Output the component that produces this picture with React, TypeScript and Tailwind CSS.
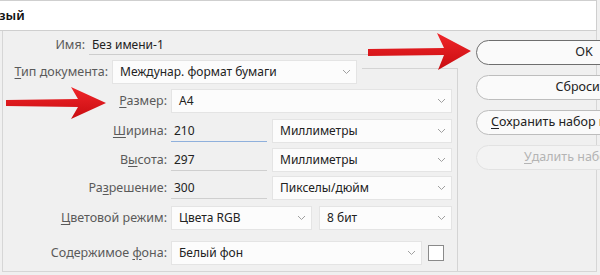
import React from "react";

const font = { fontFamily: '"Noto Sans", "Open Sans", Arial, sans-serif' };

function Chevron() {
  return (
    <svg width="9" height="6" viewBox="0 0 9 6" className="shrink-0">
      <path d="M1 1l3.5 3.5L8 1" stroke="#a0a0a0" fill="none" strokeWidth="1" />
    </svg>
  );
}

function Select({ text, w }: { text: string; w: string }) {
  return (
    <div
      className={`flex items-center justify-between bg-[#fcfcfc] border border-[#e4e4e4] h-[24px] pl-[7px] pr-[5px] text-[12px] text-[#222] ${w}`}
    >
      <span>{text}</span>
      <Chevron />
    </div>
  );
}

function U({ c }: { c: string }) {
  return <span className="underline underline-offset-2">{c}</span>;
}

function Label({ children, w }: { children: React.ReactNode; w: string }) {
  return (
    <div className={`shrink-0 text-right text-[12.5px] text-[#5a5a5a] pr-[4px] ${w}`}>{children}</div>
  );
}

function Input({ text, focused }: { text: string; focused?: boolean }) {
  return (
    <div
      className={`w-[96px] h-[22px] flex items-end pl-[3px] pb-[1px] text-[12px] text-[#222] border-b ${
        focused ? "border-[#8fb0dc]" : "border-[#cfcfcf]"
      }`}
    >
      {text}
    </div>
  );
}

export default function App() {
  return (
    <div className="relative w-[600px] h-[275px] overflow-hidden bg-[#f0f0f0]" style={font}>
      {/* title bar */}
      <div className="h-[31px] bg-white border-t border-b border-r border-[#cfcfcf] mr-[3px] flex items-center">
        <span className="text-[13px] font-semibold text-[#111] -ml-[1px]">зый</span>
      </div>
      {/* body */}
      <div className="flex h-[241px] border-l border-b border-r border-[#d6d6d6] ml-[2px] mr-[3px]">
        {/* left form */}
        <div className="w-[455px] shrink-0 flex flex-col">
          {/* name row */}
          <div className="flex items-end h-[24px]">
            <Label w="w-[86px]">
              <span className="leading-[18px]">Имя:</span>
            </Label>
            <div className="w-[365px] h-[24px] border-b border-[#cdcdcd] pl-[3px] text-[12px] text-[#222] flex items-end leading-[18px]">
              Без имени-1
            </div>
          </div>
          {/* type row */}
          <div className="flex mt-[5px] h-[29px]">
            <div className="flex items-start">
              <Label w="w-[109px]">
                <span className="leading-[24px]">
                  <U c="Т" />ип документа:
                </span>
              </Label>
              <Select text="Междунар. формат бумаги" w="w-[245px]" />
            </div>
            <div className="flex-1 ml-[5px] mt-[8px] border-t border-r border-[#d4d4d4]" />
          </div>
          {/* group rows */}
          <div className="flex-1 border-r border-[#d4d4d4] flex flex-col">
            <div className="flex items-center h-[24px]">
              <Label w="w-[168px]">
                <U c="Р" />азмер:
              </Label>
              <Select text="A4" w="w-[281px]" />
            </div>
            <div className="flex items-center h-[24px] mt-[6px]">
              <Label w="w-[168px]">
                <U c="Ш" />ирина:
              </Label>
              <Input text="210" focused />
              <div className="ml-[5px]">
                <Select text="Миллиметры" w="w-[180px]" />
              </div>
            </div>
            <div className="flex items-center h-[24px] mt-[5px]">
              <Label w="w-[168px]">
                В<U c="ы" />сота:
              </Label>
              <Input text="297" />
              <div className="ml-[5px]">
                <Select text="Миллиметры" w="w-[180px]" />
              </div>
            </div>
            <div className="flex items-center h-[24px] mt-[4px]">
              <Label w="w-[168px]">
                Ра<U c="з" />решение:
              </Label>
              <Input text="300" />
              <div className="ml-[5px]">
                <Select text="Пикселы/дюйм" w="w-[180px]" />
              </div>
            </div>
            <div className="flex items-center h-[24px] mt-[6px]">
              <Label w="w-[168px]">
                <U c="Ц" />ветовой режим:
              </Label>
              <Select text="Цвета RGB" w="w-[141px]" />
              <div className="ml-[7px]">
                <Select text="8 бит" w="w-[133px]" />
              </div>
            </div>
            <div className="flex items-center h-[24px] mt-[11px]">
              <Label w="w-[168px]">
                Содержимое <U c="ф" />она:
              </Label>
              <Select text="Белый фон" w="w-[251px]" />
              <div className="ml-[6px] w-[16px] h-[16px] border border-[#8a8a8a] bg-white" />
            </div>
          </div>
        </div>
        {/* right column: buttons */}
        <div className="flex-1 pl-[18px] pt-[9px] flex flex-col gap-[10px]">
          <div className="w-[216px] shrink-0 h-[25px] rounded-[13px] border border-[#6e6e6e] bg-[#fafafa] flex items-center justify-center text-[12.5px] text-[#222]">
            OK
          </div>
          <div className="w-[216px] shrink-0 h-[25px] rounded-[13px] border border-[#bdbdbd] bg-[#fafafa] flex items-center justify-center text-[12.5px] text-[#222]">
            Сбросить
          </div>
          <div className="w-[216px] shrink-0 h-[25px] rounded-[13px] border border-[#bdbdbd] bg-[#fafafa] flex items-center pl-[14px] text-[12.5px] text-[#222] whitespace-nowrap">
            <U c="С" />охранить набор параметров...
          </div>
          <div className="w-[216px] shrink-0 h-[25px] rounded-[13px] border border-[#e2e2e2] bg-[#f3f3f3] flex items-center pl-[47px] text-[12.5px] text-[#b4b4b4] whitespace-nowrap">
            <U c="У" />далить набор...
          </div>
        </div>
      </div>

      {/* red arrows (overlays) */}
      <svg className="absolute left-0 top-0 pointer-events-none" width="600" height="275" viewBox="0 0 600 275">
        <defs>
          <linearGradient id="rg" x1="0" y1="0" x2="0" y2="1">
            <stop offset="0" stopColor="#f0262a" />
            <stop offset="1" stopColor="#c80c10" />
          </linearGradient>
        </defs>
        <polygon points="6,100 78,99 71,87 106,103 71,119 78,107 6,106" fill="url(#rg)" />
        <polygon points="368,49 444,48 437,33 471,51 438,70 444,55 368,56" fill="url(#rg)" />
      </svg>
    </div>
  );
}
